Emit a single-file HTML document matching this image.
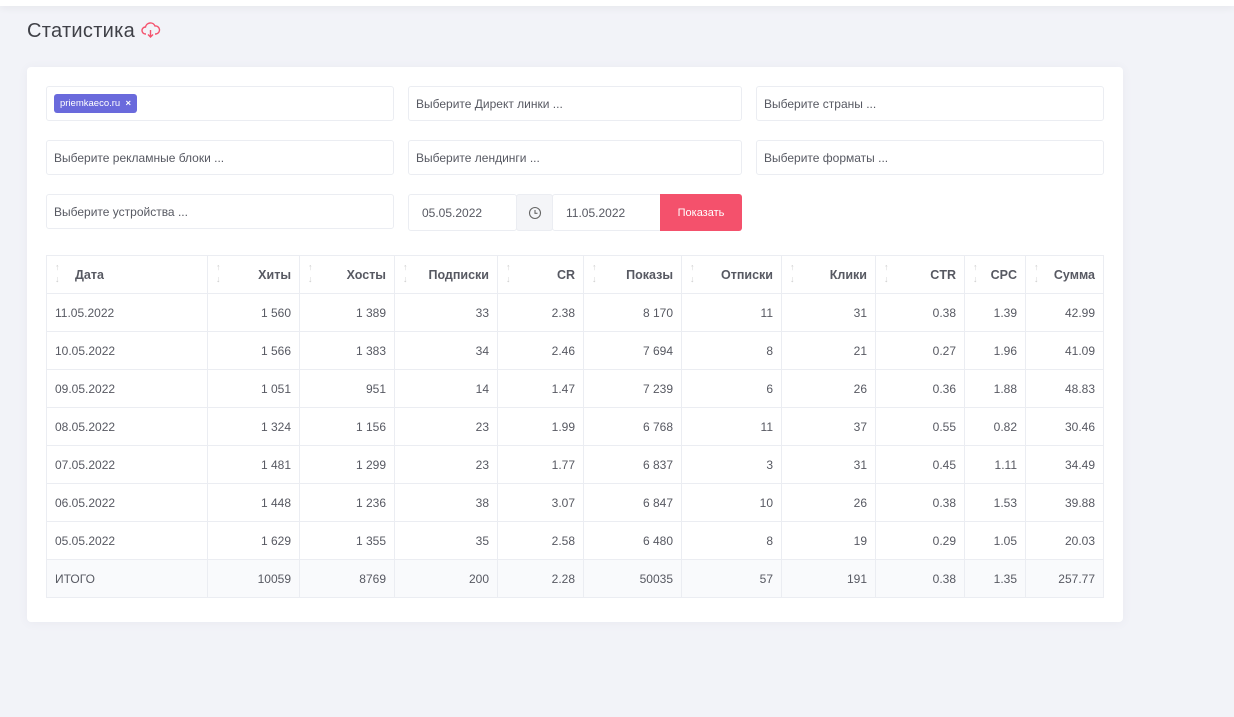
<!DOCTYPE html><html><head><meta charset="utf-8"><style>
*{box-sizing:border-box;margin:0;padding:0}
body{width:1234px;height:717px;background:#f2f3f8;font-family:"Liberation Sans",sans-serif;position:relative;overflow:hidden;color:#575962}
.top{position:absolute;left:0;top:0;width:1234px;height:6px;background:#fff;box-shadow:0 2px 8px rgba(0,0,0,.06)}
h1{position:absolute;left:27px;top:20px;font-size:20px;font-weight:normal;color:#3f4047;letter-spacing:.3px}
.card{position:absolute;left:27px;top:67px;width:1096px;height:555px;background:#fff;border-radius:4px;box-shadow:0 1px 10px rgba(80,80,120,.06)}
.in{position:absolute;border:1px solid #ebedf2;border-radius:3px;font-size:12px;color:#575962;padding-left:7px;display:flex;align-items:center}
.tag{background:#6a6adc;color:#fff;font-size:9.5px;border-radius:3px;padding:4px 6px;margin-left:0}
.btn{position:absolute;left:660px;top:194px;width:82px;height:37px;background:#f4516c;color:#fff;font-size:11px;display:flex;align-items:center;justify-content:center;border-radius:0 3px 3px 0}
table{position:absolute;left:46px;top:255px;border-collapse:collapse;font-size:12px}
td,th{border:1px solid #ebedf2;height:38px;text-align:right;padding:0 8px;color:#575962}
th{font-weight:bold;color:#575962;position:relative;font-size:12.5px}
th:before{content:"↑\A↓";white-space:pre;position:absolute;left:8px;top:5px;font-size:9px;line-height:12px;color:#ccc;font-weight:normal}
td:first-child,th:first-child{text-align:left}
th:first-child{padding-left:28px}
tr.tot td{background:#f9fafc}
</style></head><body>
<div class="top"></div>
<h1>Статистика <svg width="20" height="18" viewBox="0 0 20 18" style="vertical-align:-2px"><path d="M5 13H4.5A3.5 3.5 0 0 1 4.5 6 5 5 0 0 1 14 5 3.5 3.5 0 0 1 15 13h-1" fill="none" stroke="#f4516c" stroke-width="1.4"/><path d="M9.5 9v7M7 13.5l2.5 2.5 2.5-2.5" fill="none" stroke="#f4516c" stroke-width="1.4"/></svg></h1>
<div class="card"></div>
<div class="in" style="left:46px;top:86px;width:348px;height:35px"><span class="tag">priemkaeco.ru &nbsp;<b>×</b></span></div>
<div class="in" style="left:408px;top:86px;width:334px;height:35px">Выберите Директ линки ...</div>
<div class="in" style="left:756px;top:86px;width:348px;height:35px">Выберите страны ...</div>
<div class="in" style="left:46px;top:140px;width:348px;height:35px">Выберите рекламные блоки ...</div>
<div class="in" style="left:408px;top:140px;width:334px;height:35px">Выберите лендинги ...</div>
<div class="in" style="left:756px;top:140px;width:348px;height:35px">Выберите форматы ...</div>
<div class="in" style="left:46px;top:194px;width:348px;height:35px">Выберите устройства ...</div>
<div class="in" style="left:408px;top:194px;width:109px;height:37px;padding-left:13px">05.05.2022</div>
<div class="in" style="left:516px;top:194px;width:37px;height:37px;background:#f4f5f8;justify-content:center;padding:0"><svg width="14" height="14" viewBox="0 0 14 14"><circle cx="7" cy="7" r="5.5" fill="none" stroke="#666" stroke-width="1.1"/><path d="M7 4v3.3h2.5" fill="none" stroke="#666" stroke-width="1.1"/></svg></div>
<div class="in" style="left:552px;top:194px;width:110px;height:37px;padding-left:13px">11.05.2022</div>
<div class="btn">Показать</div>
<table>
<tr><th style="width:161px">Дата</th><th style="width:92px">Хиты</th><th style="width:95px">Хосты</th><th style="width:103px">Подписки</th><th style="width:86px">CR</th><th style="width:98px">Показы</th><th style="width:100px">Отписки</th><th style="width:94px">Клики</th><th style="width:89px">CTR</th><th style="width:61px">CPC</th><th style="width:78px">Сумма</th></tr>
<tr><td>11.05.2022</td><td>1 560</td><td>1 389</td><td>33</td><td>2.38</td><td>8 170</td><td>11</td><td>31</td><td>0.38</td><td>1.39</td><td>42.99</td></tr>
<tr><td>10.05.2022</td><td>1 566</td><td>1 383</td><td>34</td><td>2.46</td><td>7 694</td><td>8</td><td>21</td><td>0.27</td><td>1.96</td><td>41.09</td></tr>
<tr><td>09.05.2022</td><td>1 051</td><td>951</td><td>14</td><td>1.47</td><td>7 239</td><td>6</td><td>26</td><td>0.36</td><td>1.88</td><td>48.83</td></tr>
<tr><td>08.05.2022</td><td>1 324</td><td>1 156</td><td>23</td><td>1.99</td><td>6 768</td><td>11</td><td>37</td><td>0.55</td><td>0.82</td><td>30.46</td></tr>
<tr><td>07.05.2022</td><td>1 481</td><td>1 299</td><td>23</td><td>1.77</td><td>6 837</td><td>3</td><td>31</td><td>0.45</td><td>1.11</td><td>34.49</td></tr>
<tr><td>06.05.2022</td><td>1 448</td><td>1 236</td><td>38</td><td>3.07</td><td>6 847</td><td>10</td><td>26</td><td>0.38</td><td>1.53</td><td>39.88</td></tr>
<tr><td>05.05.2022</td><td>1 629</td><td>1 355</td><td>35</td><td>2.58</td><td>6 480</td><td>8</td><td>19</td><td>0.29</td><td>1.05</td><td>20.03</td></tr>
<tr class="tot"><td>ИТОГО</td><td>10059</td><td>8769</td><td>200</td><td>2.28</td><td>50035</td><td>57</td><td>191</td><td>0.38</td><td>1.35</td><td>257.77</td></tr>
</table>
</body></html>
